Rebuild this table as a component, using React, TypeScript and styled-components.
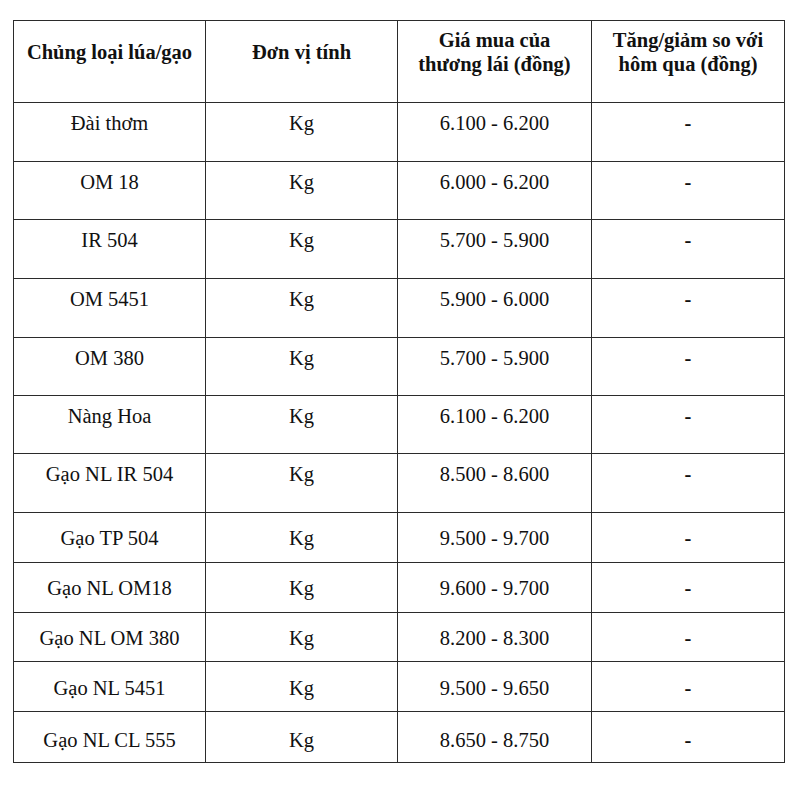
import React from 'react';
import styled, { createGlobalStyle } from 'styled-components';

const GlobalStyle = createGlobalStyle`
  html, body {
    margin: 0;
    padding: 0;
    background: #ffffff;
  }
`;

const Page = styled.div`
  width: 800px;
  height: 786px;
  padding: 20px 0 0 13px;
  box-sizing: border-box;
  background: #ffffff;
  font-family: "Liberation Serif", "Times New Roman", serif;
  color: #111;
`;

const Table = styled.table`
  width: 771px;
  border-collapse: collapse;
  table-layout: fixed;
  font-size: 20.5px;
  line-height: 24px;
`;

const HeadCell = styled.th`
  height: 82px;
  box-sizing: border-box;
  border: 1.5px solid #2b2b2b;
  padding: 0 4px 19px;
  vertical-align: middle;
  text-align: center;
  font-weight: bold;
`;

const Row = styled.tr<{ $h: number }>`
  height: ${p => p.$h}px;
`;

const Cell = styled.td<{ $pad: number }>`
  box-sizing: border-box;
  border: 1.5px solid #2b2b2b;
  padding: ${p => p.$pad}px 4px 0;
  vertical-align: top;
  text-align: center;
`;

const Dash = styled.span`
  font-weight: bold;
`;

const rows: [string, string, string, number, number][] = [
  ['Đài thơm', 'Kg', '6.100 - 6.200', 59, 8],
  ['OM 18', 'Kg', '6.000 - 6.200', 58, 8],
  ['IR 504', 'Kg', '5.700 - 5.900', 59, 8],
  ['OM 5451', 'Kg', '5.900 - 6.000', 59, 8],
  ['OM 380', 'Kg', '5.700 - 5.900', 58, 8],
  ['Nàng Hoa', 'Kg', '6.100 - 6.200', 58, 8],
  ['Gạo NL IR 504', 'Kg', '8.500 - 8.600', 59, 8],
  ['Gạo TP 504', 'Kg', '9.500 - 9.700', 50, 13],
  ['Gạo NL OM18', 'Kg', '9.600 - 9.700', 50, 13],
  ['Gạo NL OM 380', 'Kg', '8.200 - 8.300', 49, 13],
  ['Gạo NL 5451', 'Kg', '9.500 - 9.650', 50, 14],
  ['Gạo NL CL 555', 'Kg', '8.650 - 8.750', 51, 16],
];

const App: React.FC = () => {
  return (
    <Page>
      <GlobalStyle />
      <Table>
        <colgroup>
          <col style={{ width: 192 }} />
          <col style={{ width: 192 }} />
          <col style={{ width: 194 }} />
          <col style={{ width: 193 }} />
        </colgroup>
        <thead>
          <tr>
            <HeadCell>Chủng loại lúa/gạo</HeadCell>
            <HeadCell>Đơn vị tính</HeadCell>
            <HeadCell>Giá mua của<br />thương lái (đồng)</HeadCell>
            <HeadCell>Tăng/giảm so với<br />hôm qua (đồng)</HeadCell>
          </tr>
        </thead>
        <tbody>
          {rows.map(([name, unit, price, h, pad]) => (
            <Row key={name} $h={h}>
              <Cell $pad={pad}>{name}</Cell>
              <Cell $pad={pad}>{unit}</Cell>
              <Cell $pad={pad}>{price}</Cell>
              <Cell $pad={pad}><Dash>-</Dash></Cell>
            </Row>
          ))}
        </tbody>
      </Table>
    </Page>
  );
};

export default App;
